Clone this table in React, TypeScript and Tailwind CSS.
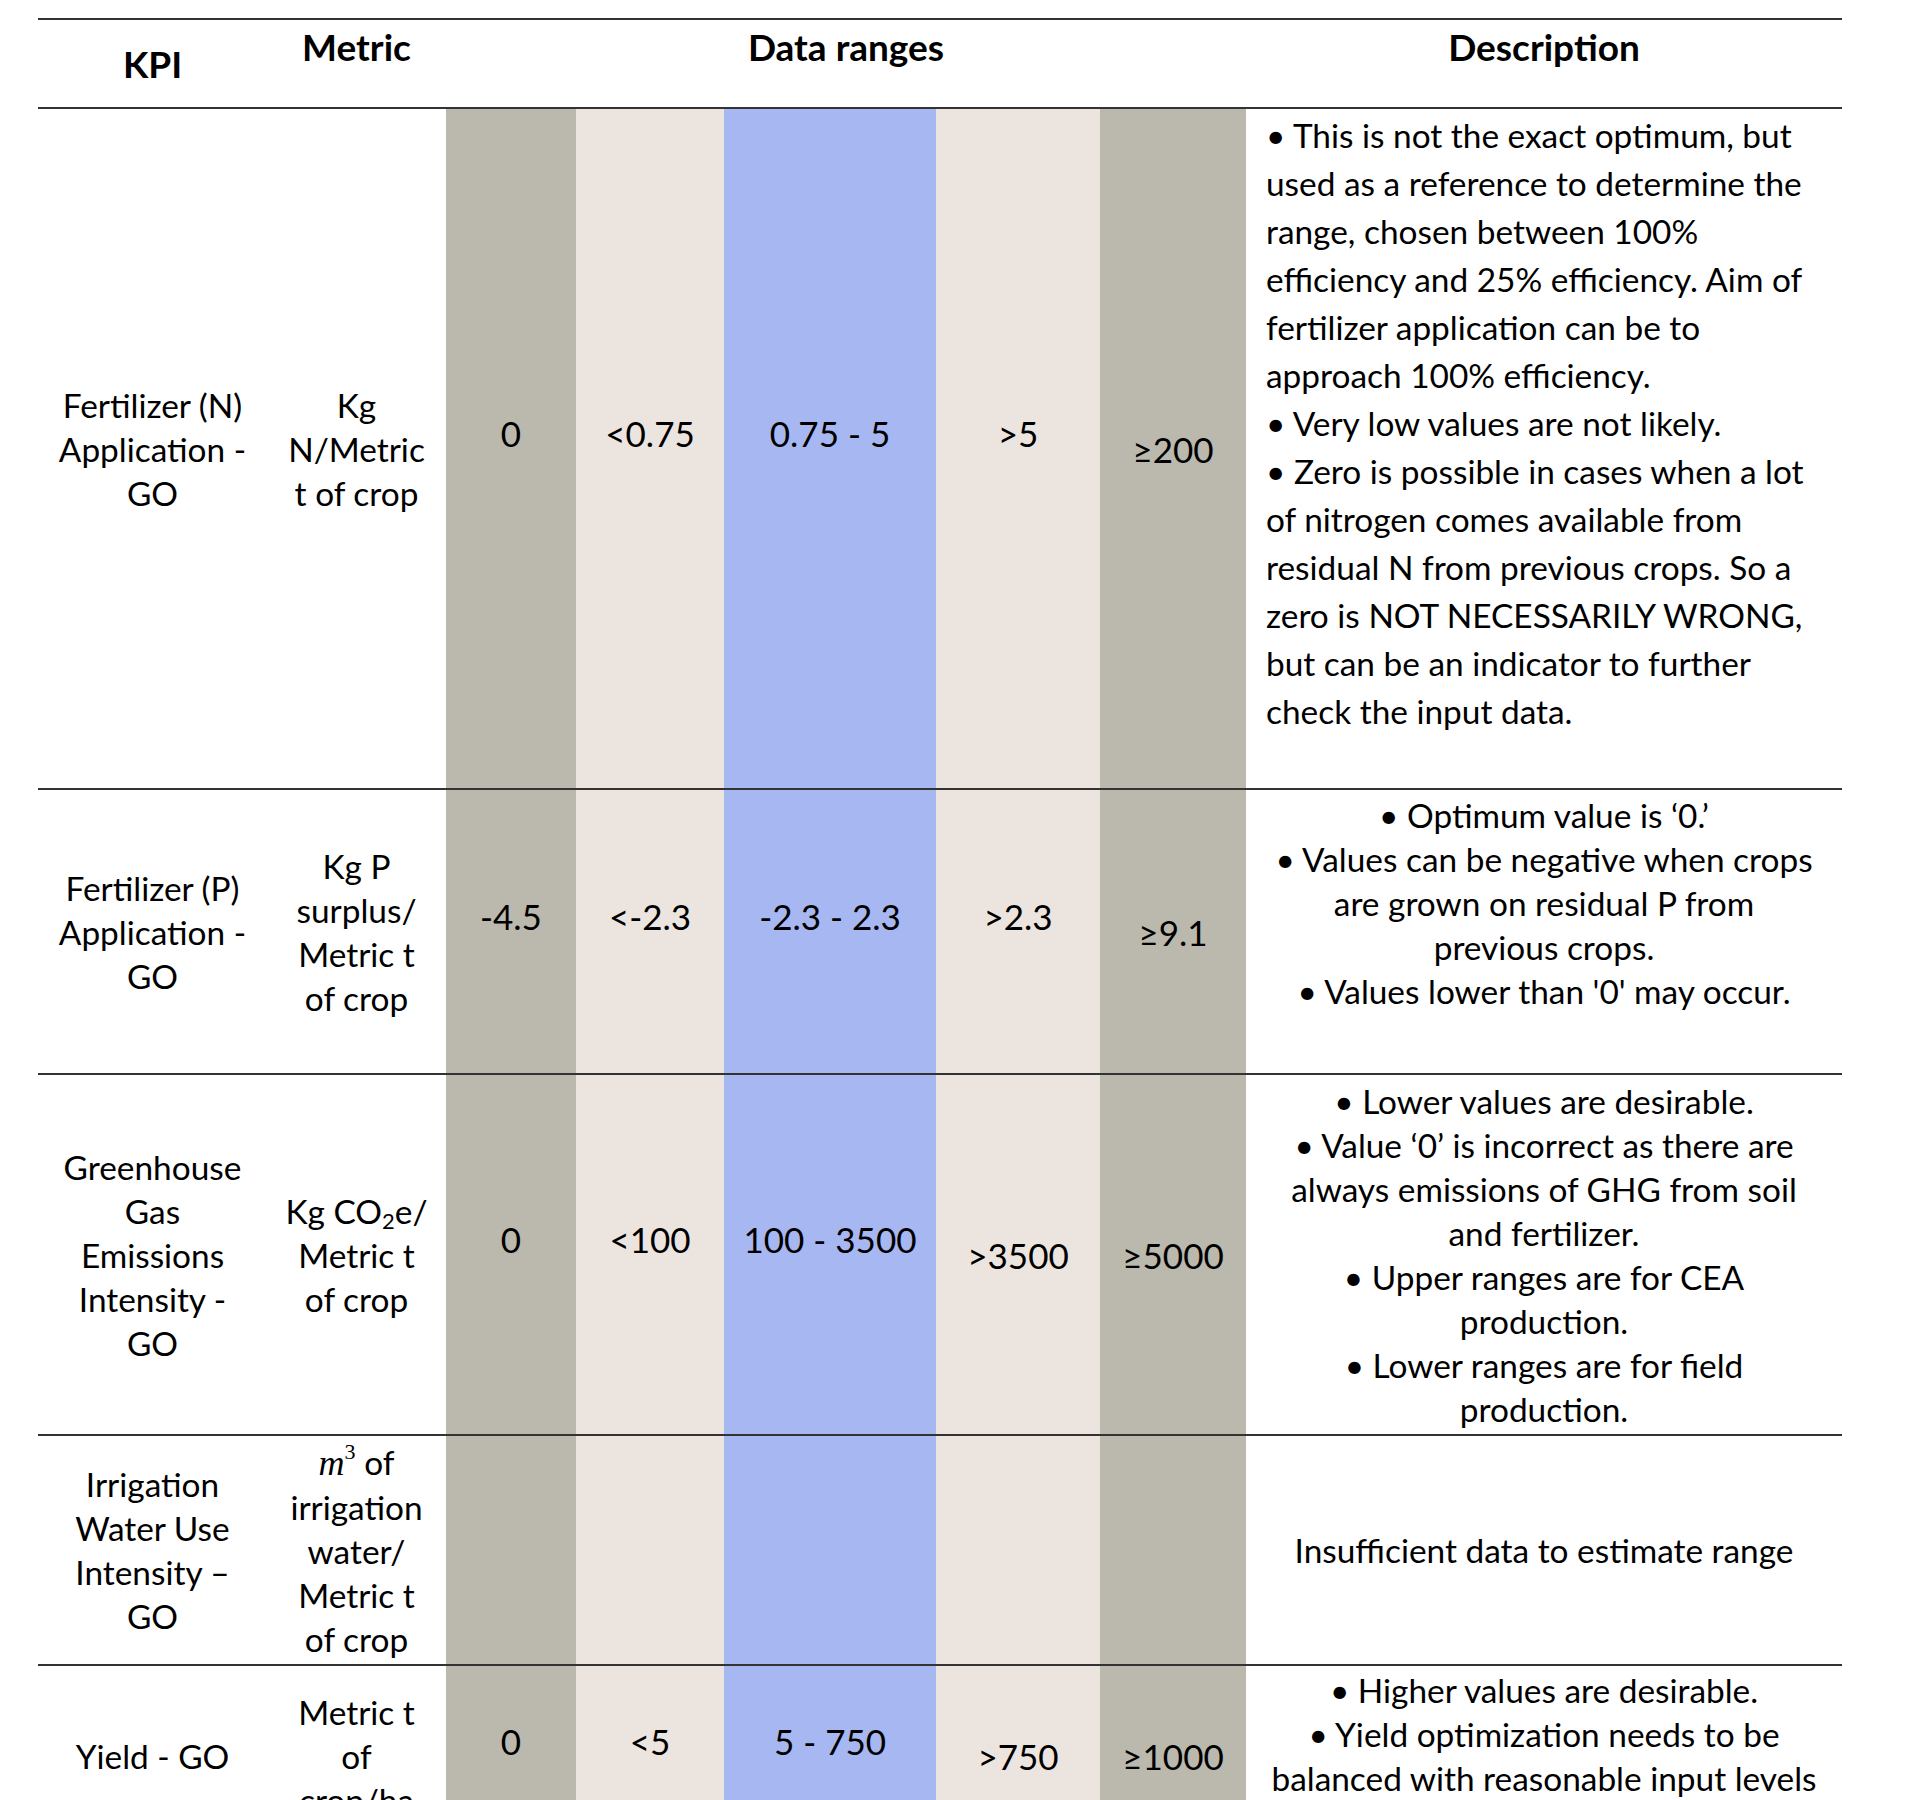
import React from 'react';

const cols = 'grid grid-cols-[229px_179px_130px_148px_212px_164px_146px_596px]';
const bands = ['bg-[#bbb8ad]', 'bg-[#ece5df]', 'bg-[#a7b7f1]', 'bg-[#ece5df]', 'bg-[#bbb8ad]'];

type Value = { text: string; low?: boolean };
type Row = {
  height: string;
  kpi: React.ReactNode[];
  metric: React.ReactNode[];
  values: Value[];
  desc: React.ReactNode[];
  descClass: string;
};

const m3 = (
  <>
    <span className="font-['Liberation_Serif'] italic text-[36px]">m</span>
    <sup className="font-['Liberation_Serif'] text-[22px] -top-[0.7em]">3</sup> of
  </>
);

const co2 = (
  <>
    Kg CO<sub className="text-[22px]">2</sub>e/
  </>
);

const rows: Row[] = [
  {
    height: 'h-[681px]',
    kpi: ['Fertilizer (N)', 'Application -', 'GO'],
    metric: ['Kg', 'N/Metric', 't of crop'],
    values: [{ text: '0' }, { text: '<0.75' }, { text: '0.75 - 5' }, { text: '>5' }, { text: '≥200', low: true }],
    desc: [
      '• This is not the exact optimum, but',
      'used as a reference to determine the',
      'range, chosen between 100%',
      'efficiency and 25% efficiency. Aim of',
      'fertilizer application can be to',
      'approach 100% efficiency.',
      '• Very low values are not likely.',
      '• Zero is possible in cases when a lot',
      'of nitrogen comes available from',
      'residual N from previous crops. So a',
      'zero is NOT NECESSARILY WRONG,',
      'but can be an indicator to further',
      'check the input data.',
    ],
    descClass: 'pl-[20px] pt-[2px] leading-[48px] text-left',
  },
  {
    height: 'h-[285px]',
    kpi: ['Fertilizer (P)', 'Application -', 'GO'],
    metric: ['Kg P', 'surplus/', 'Metric t', 'of crop'],
    values: [{ text: '-4.5' }, { text: '<-2.3' }, { text: '-2.3 - 2.3' }, { text: '>2.3' }, { text: '≥9.1', low: true }],
    desc: [
      '• Optimum value is ‘0.’',
      '• Values can be negative when crops',
      'are grown on residual P from',
      'previous crops.',
      "• Values lower than '0' may occur.",
    ],
    descClass: 'pt-[3px] leading-[44px] text-center',
  },
  {
    height: 'h-[361px]',
    kpi: ['Greenhouse', 'Gas', 'Emissions', 'Intensity -', 'GO'],
    metric: [co2, 'Metric t', 'of crop'],
    values: [{ text: '0' }, { text: '<100' }, { text: '100 - 3500' }, { text: '>3500', low: true }, { text: '≥5000', low: true }],
    desc: [
      '• Lower values are desirable.',
      '• Value ‘0’ is incorrect as there are',
      'always emissions of GHG from soil',
      'and fertilizer.',
      '• Upper ranges are for CEA',
      'production.',
      '• Lower ranges are for field',
      'production.',
    ],
    descClass: 'pt-[4px] leading-[44px] text-center',
  },
  {
    height: 'h-[230px]',
    kpi: ['Irrigation', 'Water Use', 'Intensity –', 'GO'],
    metric: [m3, 'irrigation', 'water/', 'Metric t', 'of crop'],
    values: [{ text: '' }, { text: '' }, { text: '' }, { text: '' }, { text: '' }],
    desc: ['Insufficient data to estimate range'],
    descClass: 'flex flex-col justify-center leading-[44px] text-center',
  },
  {
    height: 'h-[182px]',
    kpi: ['Yield - GO'],
    metric: ['Metric t', 'of', 'crop/ha'],
    values: [{ text: '0' }, { text: '<5' }, { text: '5 - 750' }, { text: '>750', low: true }, { text: '≥1000', low: true }],
    desc: [
      '• Higher values are desirable.',
      '• Yield optimization needs to be',
      'balanced with reasonable input levels',
    ],
    descClass: 'pt-[2px] leading-[44px] text-center',
  },
];

function Lines({ lines }: { lines: React.ReactNode[] }) {
  return (
    <>
      {lines.map((l, i) => (
        <div key={i} className="whitespace-nowrap">
          {l}
        </div>
      ))}
    </>
  );
}

export default function App() {
  return (
    <div className="w-[1906px] h-[1800px] overflow-hidden bg-white pt-[18px] pl-[38px] font-['Lato'] text-black text-[33.4px]">
      <div className="w-[1804px]">
        {/* Header */}
        <div className={`${cols} h-[89px] border-t-2 border-[#333]`}>
          <div className="flex items-center justify-center font-bold text-[37px]">KPI</div>
          <div className="pt-[5px] text-center font-bold text-[37px] leading-[44px]">Metric</div>
          <div className="col-span-5 pt-[5px] text-center font-bold text-[37px] leading-[44px]">Data ranges</div>
          <div className="pt-[5px] text-center font-bold text-[37px] leading-[44px]">Description</div>
        </div>

        {/* Body rows */}
        {rows.map((row, r) => (
          <div key={r} className={`${cols} ${row.height} border-t-2 border-[#333]`}>
            <div className="flex flex-col items-center justify-center text-center leading-[44px]">
              <Lines lines={row.kpi} />
            </div>
            <div className="flex flex-col items-center justify-center text-center leading-[44px]">
              <Lines lines={row.metric} />
            </div>
            {row.values.map((v, i) => (
              <div
                key={i}
                className={`${bands[i]} flex items-center justify-center text-[35px] leading-[44px] whitespace-nowrap ${v.low ? '' : 'pb-[31px]'}`}
              >
                {v.text}
              </div>
            ))}
            <div className={row.descClass}>
              <Lines lines={row.desc} />
            </div>
          </div>
        ))}
      </div>
    </div>
  );
}
